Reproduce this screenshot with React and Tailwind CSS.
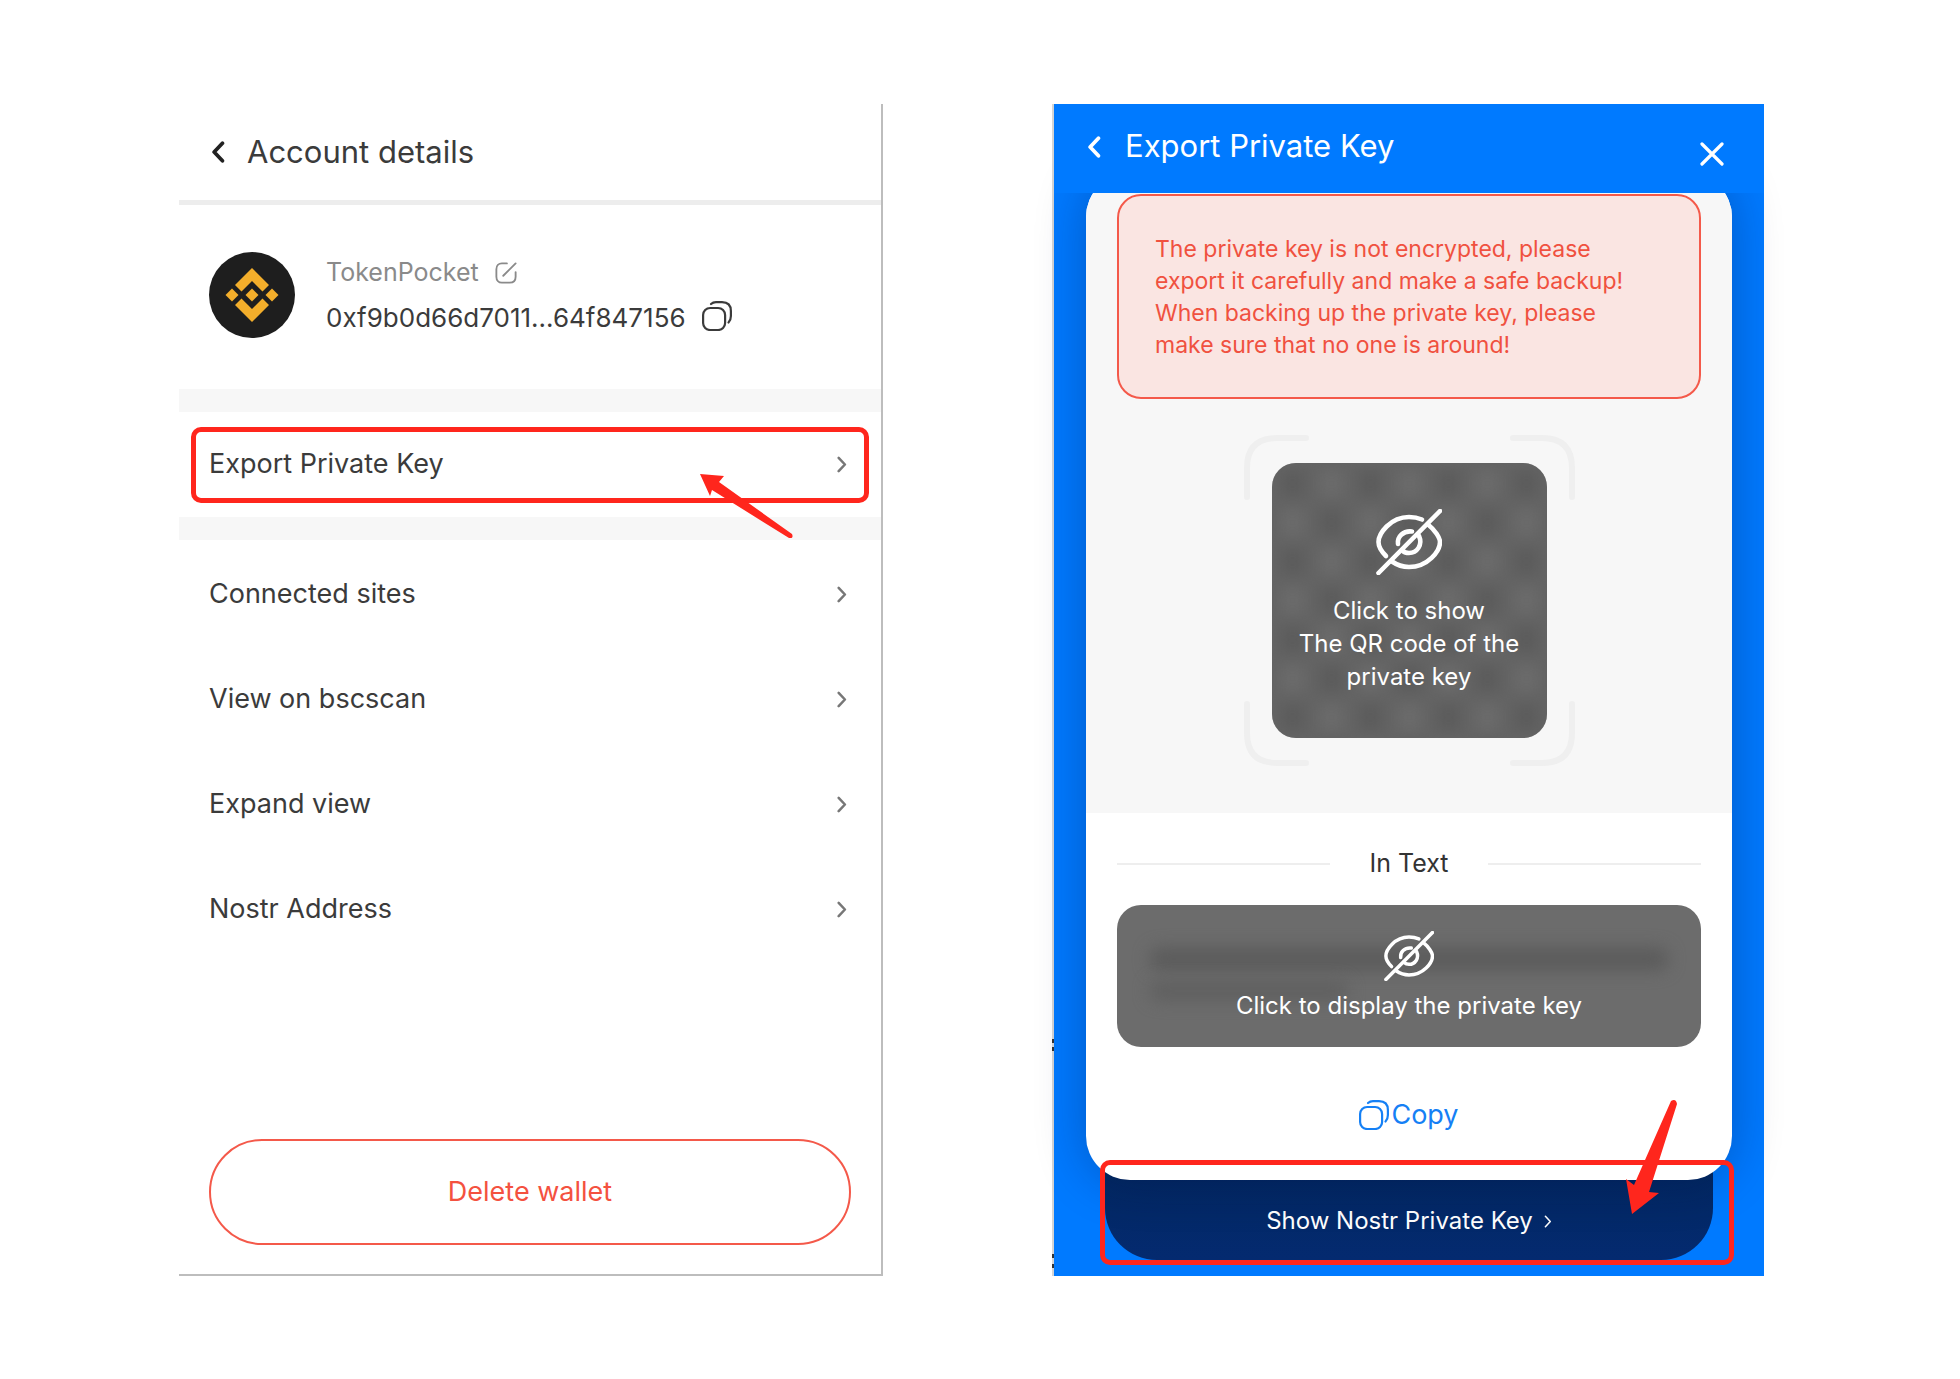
import React from "react";

function Chevron({ className, width = 3, left = false }) {
  return (
    <svg viewBox="0 0 12 20" fill="none" stroke="currentColor" strokeWidth={width} strokeLinecap="round" strokeLinejoin="round" className={className} aria-hidden="true">
      <path d={left ? "M10 2 L2.5 10 L10 18" : "M2 2 L9.5 10 L2 18"} />
    </svg>
  );
}

function CopyIcon({ className }) {
  return (
    <svg viewBox="0 0 30 30" fill="none" stroke="currentColor" strokeWidth="2.2" strokeLinecap="round" className={className} aria-hidden="true">
      <rect x="1.100" y="7" width="22" height="22" rx="7" />
      <path d="M9 3 C10.5 1.600 12 1.100 14 1.100 H20 C26 1.100 28.900 4 28.900 10 V15 C28.900 18 28 20 26.500 21.500" />
    </svg>
  );
}

function EditIcon({ className }) {
  return (
    <svg viewBox="0 0 24 24" fill="none" stroke="currentColor" strokeWidth="2" strokeLinecap="round" className={className} aria-hidden="true">
      <path d="M13 1.500 H7.500 C4 1.500 1.500 4 1.500 8 V16 C1.500 20 4 22.500 7.500 22.500 H16 C20 22.500 22.500 20 22.500 16 V11" />
      <path d="M9 15 L22.500 1.500" />
    </svg>
  );
}

function HiddenEye({ className, width }) {
  return (
    <svg viewBox="0 0 66 66" fill="none" stroke="currentColor" strokeWidth={width} strokeLinecap="round" className={className} aria-hidden="true">
      <path d="M46 10.500 C42 8.800 37 8 33 8 C14 8 2.500 25 2.500 33 C2.500 38 6 43 10 47" />
      <path d="M52 15.500 C59 21 64 29 64 33 C64 42 52 58 33 58 C27 58 21 56 16 52.500" />
      <path d="M22 35 C21 28 27 21.500 36 22.500" />
      <path d="M43 27 C47 36 41 44 33 44 C31 44 28.500 43.500 27 42" />
      <path d="M64 2 L2.500 64" />
    </svg>
  );
}

function BnbLogo({ className }) {
  return (
    <svg viewBox="0 0 86 86" className={className} role="img" aria-label="BNB">
      <circle cx="43" cy="43" r="43" fill="#1e1e1e" />
      <g fill="#f3ae2b">
        <path d="M43 16 L60 33 L53.500 39.500 L43 29 L32.500 39.500 L26 33 Z" />
        <path d="M43 70 L60 53 L53.500 46.500 L43 57 L32.500 46.500 L26 53 Z" />
        <path d="M43 36.500 L49.500 43 L43 49.500 L36.500 43 Z" />
        <path d="M23 36.500 L29.500 43 L23 49.500 L16.500 43 Z" />
        <path d="M63 36.500 L69.500 43 L63 49.500 L56.500 43 Z" />
      </g>
    </svg>
  );
}

function Row({ children }) {
  return (
    <button type="button" className="flex h-[105px] w-full items-center justify-between pl-[30px] pr-[34px] text-left text-[27px]">
      <span>{children}</span>
      <Chevron className="h-[17px] w-[10px] text-[#777]" />
    </button>
  );
}

function AccountDetails() {
  return (
    <section className="flex flex-col border-b-2 border-r-2 border-[#bdbdbd] text-[#3b3b3b]">
      <header className="flex h-[101px] items-center gap-[22px] border-b-5 border-[#ededed] pl-8">
        <button type="button" aria-label="Back">
          <Chevron left width={3.4} className="h-[22px] w-[14px] text-[#222]" />
        </button>
        <h1 className="text-[31px]">Account details</h1>
      </header>
      <div className="flex h-[184px] items-center gap-[31px] pb-1 pl-[30px]">
        <BnbLogo className="h-[86px] w-[86px] shrink-0" />
        <div className="flex flex-col gap-[5px]">
          <div className="flex h-10 items-center gap-4 text-[25px] text-[#8a8a8a]">
            TokenPocket
            <button type="button" aria-label="Rename">
              <EditIcon className="h-[22px] w-[22px]" />
            </button>
          </div>
          <div className="flex h-10 items-center gap-4 text-[26px]">
            0xf9b0d66d7011...64f847156
            <button type="button" aria-label="Copy address" className="pb-1">
              <CopyIcon className="h-[30px] w-[30px]" />
            </button>
          </div>
        </div>
      </div>
      <div className="border-y-23 border-[#f7f7f7]">
        <div className="relative">
          <Row>Export Private Key</Row>
          <div className="pointer-events-none absolute inset-x-[12px] bottom-[14px] top-[15px] rounded-[10px] border-5 border-[#ff261d]" />
          <svg viewBox="0 0 94 64" fill="#ff261d" className="pointer-events-none absolute right-[87px] top-[62px] h-[64px] w-[94px]" aria-hidden="true">
            <path d="M0 0 L24 2 L19 8 L92 60 Q94 65 89 64 L12 16 L10 22 Z" />
          </svg>
        </div>
      </div>
      <nav className="flex flex-col pt-[2px]">
        <Row>Connected sites</Row>
        <Row>View on bscscan</Row>
        <Row>Expand view</Row>
        <Row>Nostr Address</Row>
      </nav>
      <div className="mt-auto px-[30px] pb-[29px]">
        <button type="button" className="h-[106px] w-full rounded-full border-2 border-[#f4594a] text-[27px] text-[#f4513f]">
          Delete wallet
        </button>
      </div>
    </section>
  );
}

const CELLS = Array.from({ length: 81 }, (_, i) => i).filter((i) => i % 2 === 0);

function QrReveal() {
  return (
    <div className="relative mx-auto h-[331px] w-[331px] p-[28px]">
      <svg viewBox="0 0 331 331" fill="none" stroke="#efefef" strokeWidth="6" strokeLinecap="round" className="absolute inset-0 h-full w-full" aria-hidden="true">
        <path d="M3 62 V33 Q3 3 33 3 H62 M269 3 H298 Q328 3 328 33 V62 M328 269 V298 Q328 328 298 328 H269 M62 328 H33 Q3 328 3 298 V269" />
      </svg>
      <button type="button" className="relative flex h-full w-full flex-col items-center overflow-hidden rounded-[24px] bg-[#6c6c6c] pt-[46px] text-[24px] leading-[33px] text-white">
        <svg viewBox="0 0 351 351" className="absolute -left-[38px] -top-[38px] h-[351px] w-[351px] blur-[11px]" aria-hidden="true">
          {CELLS.map((i) => (
            <rect key={i} x={(i % 9) * 39} y={Math.floor(i / 9) * 39} width="39" height="39" fill="#5b5b5b" />
          ))}
        </svg>
        <HiddenEye width={4.6} className="relative h-[66px] w-[66px]" />
        <span className="relative mt-[19px]">
          Click to show
          <br />
          The QR code of the
          <br />
          private key
        </span>
      </button>
    </div>
  );
}

function ExportPrivateKey() {
  return (
    <section className="relative flex flex-col bg-[#007aff]">
      <header className="relative z-10 flex h-[89px] items-center justify-between bg-[#007aff] pl-[33px] pr-[40px] text-white">
        <div className="flex items-center gap-6 pb-1">
          <button type="button" aria-label="Back">
            <Chevron left width={3.4} className="h-[22px] w-[14px]" />
          </button>
          <h2 className="text-[31px]">Export Private Key</h2>
        </div>
        <button type="button" aria-label="Close" className="pt-[10px]">
          <svg viewBox="0 0 24 24" fill="none" stroke="currentColor" strokeWidth="3.200" strokeLinecap="round" className="h-6 w-6" aria-hidden="true">
            <path d="M2 2 L22 22 M22 2 L2 22" />
          </svg>
        </button>
      </header>
      <div className="relative z-[5] -mt-5 ml-8 mr-8 rounded-[44px] bg-white shadow-[0_0_50px_rgba(0,20,70,0.32)]">
        <div className="rounded-t-[44px] bg-[#f7f7f7] px-[31px] pb-[47px] pt-[21px]">
          <p className="mb-9 flex min-h-[205px] items-center rounded-[24px] border-2 border-[#f4594a] bg-[#fae5e2] px-9 text-[23px] leading-8 text-[#f0513f]">
            <span>
              The private key is not encrypted, please
              <br />
              export it carefully and make a safe backup!
              <br />
              When backing up the private key, please
              <br />
              make sure that no one is around!
            </span>
          </p>
          <QrReveal />
        </div>
        <div className="flex flex-col px-[31px] pb-[43px] pt-[33px]">
          <div className="flex h-9 items-center gap-[39px] text-[25px] text-[#333]">
            <div className="h-[2px] flex-1 bg-[#eee]" />
            In Text
            <div className="h-[2px] flex-1 bg-[#eee]" />
          </div>
          <button type="button" className="relative mt-[23px] flex h-[142px] flex-col items-center overflow-hidden rounded-[24px] bg-[#6c6c6c] pt-[26px] text-[24px] leading-[33px] text-white">
            <span className="absolute left-8 right-8 top-[42px] h-6 rounded-full bg-[#5c5c5c] blur-[8px]" />
            <span className="absolute left-8 top-[76px] h-5 w-[200px] rounded-full bg-[#606060] blur-[8px]" />
            <HiddenEye width={4.6} className="relative h-[50px] w-[50px]" />
            <span className="relative mt-[8px]">Click to display the private key</span>
          </button>
          <button type="button" className="mx-auto mt-[46px] flex h-11 items-center gap-[2px] text-[27px] text-[#1580f5]">
            <CopyIcon className="h-[30px] w-[30px]" />
            Copy
          </button>
        </div>
      </div>
      <div className="relative">
        <button type="button" className="-mt-10 mx-[51px] flex h-[120px] w-[calc(100%-102px)] items-center justify-center gap-[11px] rounded-b-[52px] bg-gradient-to-b from-[#02275c] to-[#042a70] pt-[42px] text-[24px] text-white">
          Show Nostr Private Key
          <Chevron width={2.4} className="h-[13px] w-[8px]" />
        </button>
      </div>
      <div className="relative z-20 h-[16px]">
        <div className="pointer-events-none absolute bottom-[11px] left-[46px] right-[30px] h-[105px] rounded-[10px] border-5 border-[#ff261d]" />
        <svg viewBox="0 0 58 116" fill="#ff261d" className="pointer-events-none absolute bottom-[61px] right-[84px] h-[116px] w-[58px]" aria-hidden="true">
          <path d="M49 2 Q54 -1 55 5 L27 93 L37 94 L10 115 L4 80 L12 86 Z" />
        </svg>
      </div>
      <div className="absolute -left-[2px] bottom-0 top-0 w-[2px] bg-[#d4d4d4]">
        <span className="absolute left-0 top-[935px] h-1 w-[2px] bg-[#333]" />
        <span className="absolute left-0 top-[943px] h-1 w-[2px] bg-[#333]" />
        <span className="absolute left-0 top-[1150px] h-1 w-[2px] bg-[#333]" />
        <span className="absolute left-0 top-[1160px] h-1 w-[2px] bg-[#333]" />
      </div>
    </section>
  );
}

export default function App() {
  return (
    <main className="grid min-h-[1379px] grid-cols-[704fr_710fr] gap-[171px] bg-white pb-[103px] pl-[179px] pr-[196px] pt-[104px] font-[Inter,sans-serif]">
      <AccountDetails />
      <ExportPrivateKey />
    </main>
  );
}
